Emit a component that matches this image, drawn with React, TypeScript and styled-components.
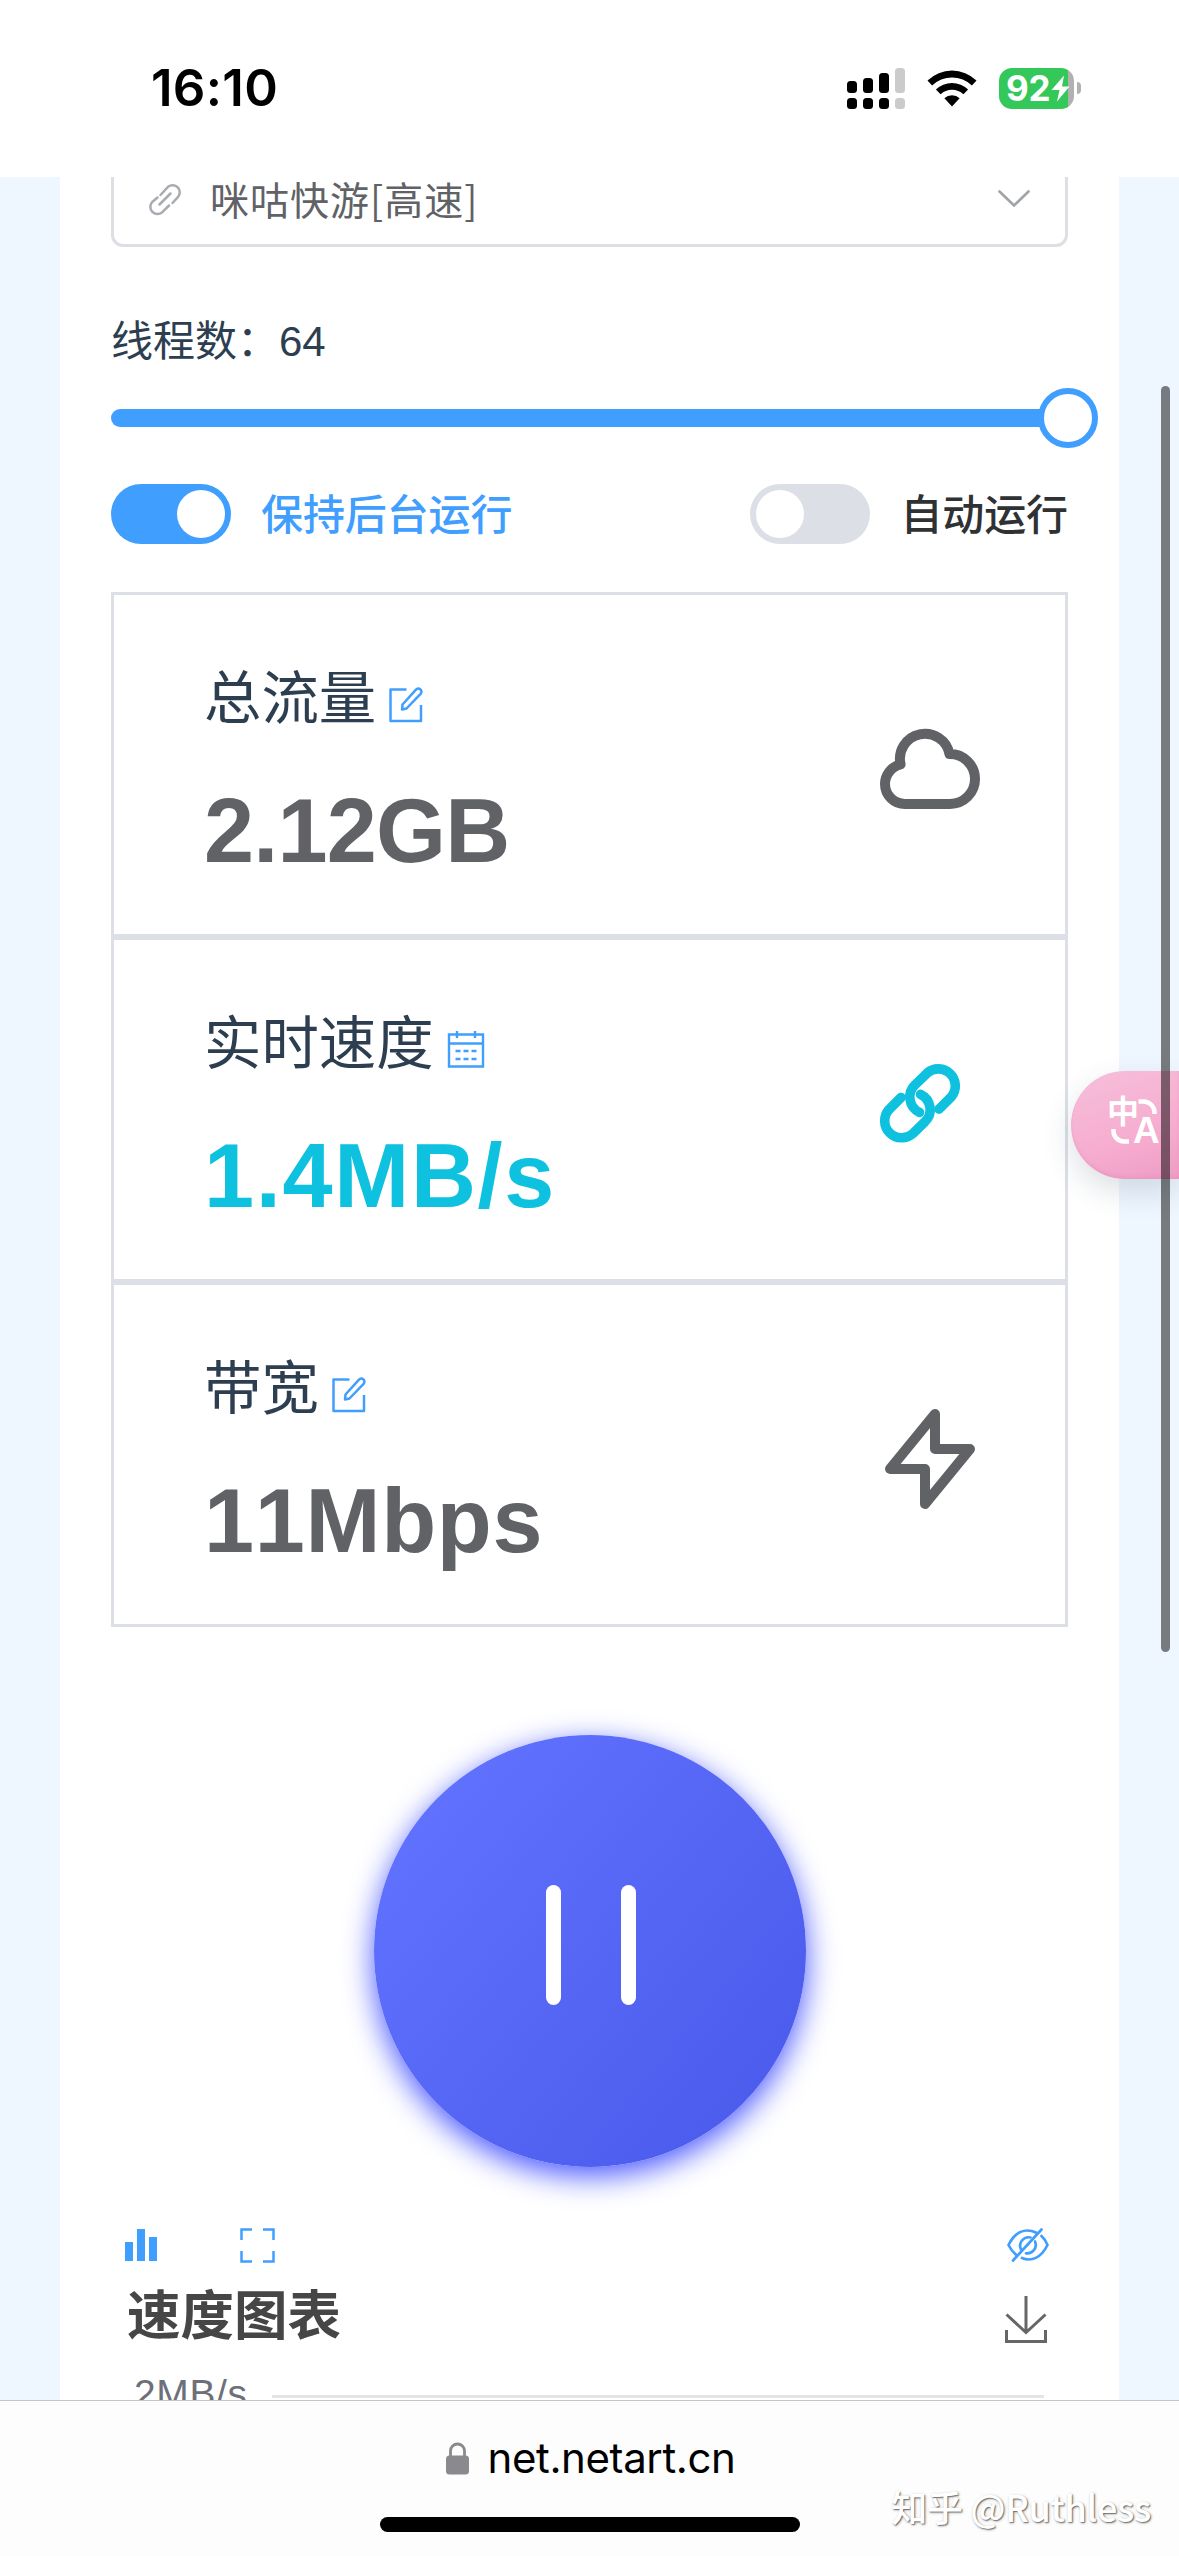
import React from "react";
import styled, { createGlobalStyle } from "styled-components";

const latin = `"Liberation Sans", "Noto Sans CJK SC", sans-serif`;
const system = `Inter, "Noto Sans CJK SC", sans-serif`;
const blue = "#409eff";

const GlobalStyle = createGlobalStyle`
  *, *::before, *::after { box-sizing: border-box; }
  body { margin: 0; background: #fff; }
  svg { display: block; flex: none; }
`;

const Screen = styled.div`
  position: relative;
  display: flex;
  flex-direction: column;
  width: 1179px;
  height: 2556px;
  overflow: hidden;
  background: #fff;
  font-family: ${latin};
`;

const StatusBar = styled.header`
  flex: none;
  display: flex;
  justify-content: space-between;
  height: 177px;
  padding: 58px 98px 59px 151px;
  align-items: center;
  font-family: ${system};
`;

const Clock = styled.time`
  font-size: 51px;
  font-weight: 600;
  line-height: 60px;
  letter-spacing: 0.3px;
  color: #000;
`;

const StatusIcons = styled.div`
  display: flex;
  align-items: center;
`;

const SignalGrid = styled.div`
  display: grid;
  grid-template-columns: repeat(4, 10px);
  grid-template-rows: 25px 11px;
  gap: 5px 6px;
  align-items: end;
  margin-right: 22px;
`;

const SignalBar = styled.i<{ $h: number; $off?: boolean }>`
  height: ${(p) => p.$h}px;
  border-radius: 3.5px;
  background: ${(p) => (p.$off ? "#cbcbcb" : "#000")};
`;

const Battery = styled.div`
  display: flex;
  align-items: center;
  width: 75px;
  height: 41px;
  margin: 0 3px 0 22px;
  padding-left: 7px;
  border-radius: 13px;
  background: linear-gradient(90deg, #34c759 69px, #b1b1b1 69px);
  color: #fff;
  font-size: 35px;
  font-weight: 700;
  line-height: 41px;
  letter-spacing: -0.3px;
  gap: 1px;
`;

const BatteryCap = styled.i`
  width: 4px;
  height: 12px;
  border-radius: 0 6px 6px 0;
  background: #b1b1b1;
`;

const Viewport = styled.main`
  flex: 1;
  min-height: 0;
  overflow: hidden;
  padding: 0 60px;
  background: #eef6ff;
`;

const Panel = styled.section`
  display: flex;
  flex-direction: column;
  height: 2300px;
  padding: 0 51px;
  background: #fff;
`;

const SourceSelect = styled.div`
  flex: none;
  display: flex;
  align-items: center;
  height: 96px;
  margin-top: -26px;
  padding: 0 35px 0 34px;
  border: 3px solid #dcdfe3;
  border-radius: 12px;
  color: #606266;
  font-size: 39px;
  line-height: 60px;
`;

const SourceName = styled.span`
  flex: 1;
  margin-left: 28px;
  padding-bottom: 3px;
  font-family: "Noto Sans CJK SC", sans-serif;
  letter-spacing: 1px;
`;

const ThreadLabel = styled.div`
  margin-top: 65px;
  height: 58px;
  color: #2c3e50;
  font-size: 42px;
  line-height: 60px;
`;

const Slider = styled.div`
  display: flex;
  align-items: center;
  height: 60px;
  margin: 18px -30px 0 0;
`;

const SliderTrack = styled.div`
  flex: 1;
  height: 18px;
  margin-right: -6px;
  border-radius: 9px 0 0 9px;
  background: ${blue};
`;

const SliderThumb = styled.div`
  width: 60px;
  height: 60px;
  border: 6px solid ${blue};
  border-radius: 50%;
  background: #fff;
`;

const SwitchRow = styled.div`
  display: flex;
  justify-content: space-between;
  height: 60px;
  margin-top: 36px;
`;

const SwitchField = styled.label<{ $on?: boolean }>`
  display: flex;
  align-items: center;
  gap: 30px;
  color: ${(p) => (p.$on ? blue : "#303133")};
  font-size: 42px;
  font-weight: 500;
  line-height: 60px;
  letter-spacing: -0.1px;
`;

const SwitchText = styled.span`
  height: 60px;
  line-height: 63px;
`;

const SwitchTrack = styled.span<{ $on?: boolean }>`
  display: flex;
  justify-content: ${(p) => (p.$on ? "flex-end" : "flex-start")};
  width: 120px;
  height: 60px;
  padding: 6px;
  border-radius: 30px;
  background: ${(p) => (p.$on ? blue : "#dcdfe6")};
`;

const SwitchKnob = styled.span`
  width: 48px;
  height: 48px;
  border-radius: 50%;
  background: #fff;
`;

const Cards = styled.div`
  display: flex;
  flex-direction: column;
  margin-top: 48px;
`;

const Card = styled.article`
  display: flex;
  justify-content: space-between;
  height: 345px;
  padding: 64px 75px 0 90px;
  border: 3px solid #dcdfe6;
  background: #fff;
`;

const CardTitle = styled.h2`
  display: flex;
  align-items: center;
  gap: 13px;
  height: 80px;
  margin: 0 0 40px;
  color: #2c3e50;
  font-size: 57.4px;
  font-weight: 400;
  line-height: 80px;
  svg { margin-top: 11px; }
`;

const CardValue = styled.div<{ $color: string; $tracking: number }>`
  height: 104px;
  color: ${(p) => p.$color};
  font-size: 90px;
  font-weight: 700;
  line-height: 104px;
  letter-spacing: ${(p) => p.$tracking}px;
  font-kerning: none;
`;

const CardIcon = styled.div<{ $color: string }>`
  margin-top: 50px;
  color: ${(p) => p.$color};
`;

const PauseButton = styled.button`
  flex: none;
  align-self: center;
  display: flex;
  justify-content: center;
  gap: 60px;
  width: 432px;
  height: 432px;
  margin: 108px 0 0 1px;
  padding: 150px 0 0 2px;
  border: 0;
  border-radius: 50%;
  background: linear-gradient(130deg, #6173ff 6%, #4a5aeb 94%);
  box-shadow: 0 9px 30px #4a58ff;
`;

const PauseBar = styled.span`
  width: 15px;
  height: 120px;
  border-radius: 8px;
  background: #fff;
`;

const ChartTools = styled.div`
  display: flex;
  align-items: center;
  height: 60px;
  margin-top: 48px;
  padding: 0 19px 0 14px;
`;

const Spacer = styled.span<{ $w?: number }>`
  ${(p) => (p.$w ? `width: ${p.$w}px;` : "flex: 1;")}
`;

const ChartHeader = styled.div`
  display: flex;
  align-items: center;
  justify-content: space-between;
  height: 60px;
  margin-top: 12px;
  padding: 0 21px 0 16px;
  svg { margin-top: 5px; }
`;

const ChartTitle = styled.h3`
  margin: 0;
  color: #464646;
  font-size: 53.5px;
  font-weight: 700;
  line-height: 60px;
`;

const AxisRow = styled.div`
  display: flex;
  align-items: center;
  gap: 24px;
  height: 60px;
  margin-top: 19px;
  padding: 0 24px 0 23px;
  color: #6e7079;
  font-size: 39px;
  letter-spacing: 0.6px;
`;

const AxisLabel = styled.span`
  height: 60px;
  line-height: 55px;
`;

const GridLine = styled.i`
  flex: 1;
  height: 3px;
  background: #e1e5e8;
`;

const BrowserBar = styled.footer`
  flex: none;
  display: flex;
  flex-direction: column;
  align-items: center;
  height: 156px;
  border-top: 1px solid #c4c4c6;
  background: #fdfdfe;
`;

const Address = styled.div`
  display: flex;
  align-items: center;
  gap: 19px;
  height: 60px;
  margin: 27px 0 29px 2px;
  color: #000;
  font-family: ${system};
  font-size: 42px;
  line-height: 60px;
  letter-spacing: -0.4px;
`;

const HomeIndicator = styled.i`
  width: 420px;
  height: 15px;
  border-radius: 8px;
  background: #000;
`;

const TranslateTab = styled.div`
  position: absolute;
  top: 1071px;
  right: 0;
  width: 108px;
  height: 108px;
  border-radius: 54px 0 0 54px;
  background: linear-gradient(160deg, #f6bfdb 0%, #f6add0 60%, #ee9cc4 100%);
  box-shadow: 0 12px 30px rgba(40, 60, 80, 0.16), inset 0 -3px 3px rgba(225, 130, 180, 0.25);
  color: #fff;
  font-weight: 700;
  svg { position: absolute; left: 36px; top: 24px; }
`;

const TabGlyph = styled.span<{ $x: number; $y: number; $size: number }>`
  position: absolute;
  left: ${(p) => p.$x}px;
  top: ${(p) => p.$y}px;
  font-size: ${(p) => p.$size}px;
  line-height: 36px;
`;

const ScrollThumb = styled.i`
  position: absolute;
  top: 386px;
  right: 9px;
  width: 9px;
  height: 1266px;
  border-radius: 5px;
  background: rgba(0, 0, 0, 0.5);
`;

const Watermark = styled.div`
  position: absolute;
  right: 28px;
  top: 2483px;
  color: #fff;
  font-family: "Noto Sans CJK SC", sans-serif;
  font-size: 36px;
  font-weight: 500;
  line-height: 46px;
  letter-spacing: -0.3px;
  white-space: nowrap;
  text-shadow: 1px 1px 1px rgba(0, 0, 0, 0.4), 1px 1px 3px rgba(0, 0, 0, 0.35);
`;

const WifiIcon = () => (
  <svg width="50" height="37" viewBox="0 0 49 37" fill="#000">
    <path d="M0 10.6a35 35 0 0 1 49 0l-4.6 4.9a28.5 28.5 0 0 0-39.8 0z" />
    <path d="M8.4 19.5a23 23 0 0 1 32.2 0l-4.7 4.8a16.5 16.5 0 0 0-22.8 0z" />
    <path d="M16.9 28.3a11 11 0 0 1 15.2 0L24.5 36.500z" />
  </svg>
);

const ChargeIcon = () => (
  <svg width="19" height="27" viewBox="0 0 19 27" fill="#fff">
    <path d="M13 0.500L0.500 15h8L6 26.500 18.500 11.500H11z" />
  </svg>
);

const ChainIcon = () => (
  <svg width="34" height="34" viewBox="0 0 34 34" fill="none" stroke="#a8abb2" strokeWidth="2.5" strokeLinecap="round">
    <path d="M12.500 13L20 4.800a7.200 7.200 0 0 1 9.900 10.400L24.500 21" />
    <path d="M9.500 15.500L4.200 20a7.200 7.200 0 0 0 9.900 10.400L21 23.500" />
    <path d="M11.500 22.500L22.500 11.500" />
  </svg>
);

const ChevronIcon = () => (
  <svg width="32" height="18" viewBox="0 0 32 18" fill="none" stroke="#a0a3a8" strokeWidth="2.600" strokeLinecap="round">
    <path d="M1.500 1.500L16 15.500 30.500 1.500" />
  </svg>
);

const EditIcon = () => (
  <svg width="34" height="36" viewBox="0 0 34 36" fill="none" stroke={blue} strokeWidth="2.500" strokeLinejoin="round">
    <path d="M17.500 2.500H1.500v31.500h30.500V18" />
    <path d="M13 22.500l.5-5L27 2.600a3 3 0 0 1 4.600 4.200L17.500 21.500z" />
  </svg>
);

const CalendarIcon = () => (
  <svg width="38" height="38" viewBox="0 0 38 38" fill="none" stroke={blue} strokeWidth="2.400">
    <path d="M2 3.500h34v32H2zM2 12.500h34M10 0v7M28 0v7" />
    <path d="M8.500 20h5M16.500 20h5M24.500 20h5M8.500 28h5M16.500 28h5M24.500 28h5" />
  </svg>
);

const CloudIcon = () => (
  <svg width="120" height="120" viewBox="0 0 24 24" fill="none" stroke="currentColor" strokeWidth="2" strokeLinecap="round" strokeLinejoin="round">
    <path d="M3 15a4 4 0 004 4h9a5 5 0 10-.1-9.999 5.002 5.002 0 10-9.780 2.096A4.001 4.001 0 003 15z" />
  </svg>
);

const LinkIcon = () => (
  <svg width="120" height="120" viewBox="0 0 120 120" fill="none" stroke="currentColor" strokeWidth="9.600" strokeLinecap="round">
    <path d="M69 55.200L81 43.200A17 17 0 0 0 57 19.200L45.300 30.600A17 17 0 0 0 49.500 58.400" />
    <path d="M31 43.500L19 55.500A17 17 0 0 0 43 79.500L54.700 68.100A17 17 0 0 0 50.500 40.300" />
  </svg>
);

const BoltIcon = () => (
  <svg width="120" height="120" viewBox="0 0 24 24" fill="none" stroke="currentColor" strokeWidth="2" strokeLinecap="round" strokeLinejoin="round">
    <path d="M13 10V3L4 14h7v7l9-11h-7z" />
  </svg>
);

const BarsIcon = () => (
  <svg width="32" height="32" viewBox="0 0 32 32" fill={blue}>
    <path d="M0 13h8v19H0zM12 0h8v32h-8zM24 8h8v24h-8z" />
  </svg>
);

const FullScreenIcon = () => (
  <svg width="35" height="35" viewBox="0 0 35 35" fill="none" stroke={blue} strokeWidth="2.500">
    <path d="M1.500 12V1.500H12M23 1.500h10.500V12M33.500 23v10.500H23M12 33.500H1.500V23" />
  </svg>
);

const HiddenEyeIcon = () => (
  <svg width="42" height="34" viewBox="0 0 42 34" fill="none" stroke={blue} strokeWidth="2.700" strokeLinecap="round" strokeLinejoin="round">
    <path d="M29.500 4.800C18 -0.500 8 4 1.500 17c2.200 4.300 4.600 7.400 7.400 9.600M34.500 8c2.500 2.200 4.500 5.200 6 9C34 30 24.500 34 15 30" />
    <path d="M23.500 9.500A8.500 8.500 0 0 0 14 21.500M28 13.500A8.500 8.500 0 0 1 19 25.300" />
    <path d="M34.500 1.500L6 32.500" />
  </svg>
);

const DownloadIcon = () => (
  <svg width="42" height="47" viewBox="0 0 42 47" fill="none" stroke="#666" strokeWidth="3">
    <path d="M21 0v36M1.500 18.500L21 36.500 40.500 18.500M1.500 34v11.500h39V34" />
  </svg>
);

const LockIcon = () => (
  <svg width="23" height="33" viewBox="0 0 23 33">
    <path d="M4.500 15V9a7 7 0 0 1 14 0v6" fill="none" stroke="#8a8a8e" strokeWidth="2.800" />
    <rect x="0" y="13.500" width="23" height="19" rx="3.500" fill="#8a8a8e" />
  </svg>
);

const TranslateArcs = () => (
  <svg width="56" height="54" viewBox="0 0 56 54" fill="none" stroke="#fff" strokeWidth="4.500">
    <path d="M31.500 6.500h5a11 11 0 0 1 11 11v1.500M6.500 34v2a10.500 10.500 0 0 0 10.500 10.500h5" />
  </svg>
);

const signal = [
  { h: 12 },
  { h: 15 },
  { h: 20 },
  { h: 25, off: true },
];

const metrics = [
  { title: "总流量", value: "2.12GB", tracking: -0.8, color: "#606266", Mark: EditIcon, Icon: CloudIcon },
  { title: "实时速度", value: "1.4MB/s", tracking: 1.7, color: "#0dc1df", Mark: CalendarIcon, Icon: LinkIcon },
  { title: "带宽", value: "11Mbps", tracking: 0.7, color: "#606266", Mark: EditIcon, Icon: BoltIcon },
];

export default function App() {
  return (
    <Screen>
      <GlobalStyle />
      <StatusBar>
        <Clock>16:10</Clock>
        <StatusIcons>
          <SignalGrid>
            {signal.map((s, i) => (
              <SignalBar key={i} $h={s.h} $off={s.off} />
            ))}
            {signal.map((s, i) => (
              <SignalBar key={i + 4} $h={11} $off={s.off} />
            ))}
          </SignalGrid>
          <WifiIcon />
          <Battery>
            92
            <ChargeIcon />
          </Battery>
          <BatteryCap />
        </StatusIcons>
      </StatusBar>

      <Viewport>
        <Panel>
          <SourceSelect>
            <ChainIcon />
            <SourceName>咪咕快游[高速]</SourceName>
            <ChevronIcon />
          </SourceSelect>
          <ThreadLabel>线程数：64</ThreadLabel>
          <Slider>
            <SliderTrack />
            <SliderThumb />
          </Slider>
          <SwitchRow>
            <SwitchField $on>
              <SwitchTrack $on>
                <SwitchKnob />
              </SwitchTrack>
              <SwitchText>保持后台运行</SwitchText>
            </SwitchField>
            <SwitchField>
              <SwitchTrack>
                <SwitchKnob />
              </SwitchTrack>
              <SwitchText>自动运行</SwitchText>
            </SwitchField>
          </SwitchRow>
          <Cards>
            {metrics.map(({ title, value, tracking, color, Mark, Icon }) => (
              <Card key={title}>
                <div>
                  <CardTitle>
                    {title}
                    <Mark />
                  </CardTitle>
                  <CardValue $color={color} $tracking={tracking}>{value}</CardValue>
                </div>
                <CardIcon $color={color}>
                  <Icon />
                </CardIcon>
              </Card>
            ))}
          </Cards>
          <PauseButton aria-label="pause">
            <PauseBar />
            <PauseBar />
          </PauseButton>
          <ChartTools>
            <BarsIcon />
            <Spacer $w={83} />
            <FullScreenIcon />
            <Spacer />
            <HiddenEyeIcon />
          </ChartTools>
          <ChartHeader>
            <ChartTitle>速度图表</ChartTitle>
            <DownloadIcon />
          </ChartHeader>
          <AxisRow>
            <AxisLabel>2MB/s</AxisLabel>
            <GridLine />
          </AxisRow>
        </Panel>
      </Viewport>

      <BrowserBar>
        <Address>
          <LockIcon />
          net.netart.cn
        </Address>
        <HomeIndicator />
      </BrowserBar>

      <TranslateTab>
        <TabGlyph $x={36} $y={23} $size={32}>中</TabGlyph>
        <TabGlyph $x={62} $y={42} $size={37}>A</TabGlyph>
        <TranslateArcs />
      </TranslateTab>
      <ScrollThumb />
      <Watermark>知乎 @Ruthless</Watermark>
    </Screen>
  );
}
